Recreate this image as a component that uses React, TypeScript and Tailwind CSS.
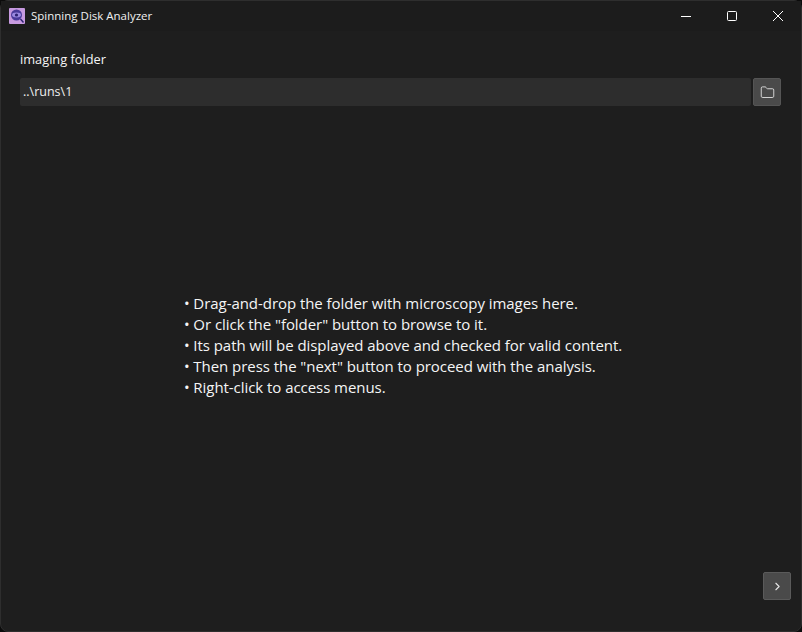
import {ChevronRight, Folder} from 'lucide-react';

const lines = [
    'Drag-and-drop the folder with microscopy images here.',
    'Or click the "folder" button to browse to it.',
    'Its path will be displayed above and checked for valid content.',
    'Then press the "next" button to proceed with the analysis.',
    'Right-click to access menus.',
];

const AppIcon = () => (
    <svg width="16" height="16" viewBox="0 0 16 16" className="shrink-0">
        <rect width="16" height="16" rx="1" fill="#c79ae0"/>
        <circle cx="7.5" cy="7" r="5.5" fill="#4a3a9a"/>
        <ellipse cx="7.5" cy="7" rx="4.5" ry="2.4" fill="#9a88e0"/>
        <circle cx="7.5" cy="7" r="1.6" fill="#2c2170"/>
        <path d="M11.5 11 L14.5 14.5" stroke="#2c2170" strokeWidth="1.4"/>
    </svg>
);

export default function App() {
    return (
        <div className="h-[632px] w-[802px] bg-[#0b0b0b] font-['Open_Sans','Noto_Sans',sans-serif]">
            <div className="flex h-full flex-col rounded-[8px] border border-[#2e2e2e] bg-[#1e1e1e] text-white">
                <div className="flex h-[30px] shrink-0 items-center bg-[#1c1c1c] pl-[8px]">
                    <AppIcon/>
                    <span className="ml-[6px] text-[11.5px] text-[#f0f0f0]">Spinning Disk Analyzer</span>
                    <div className="ml-auto flex items-center">
                        <div className="flex h-[30px] w-[46px] items-center justify-center">
                            <svg width="10" height="10" viewBox="0 0 10 10" fill="none" stroke="#fff" strokeWidth="1">
                                <path d="M0 5.5H10"/>
                            </svg>
                        </div>
                        <div className="flex h-[30px] w-[46px] items-center justify-center">
                            <svg width="10" height="10" viewBox="0 0 10 10" fill="none" stroke="#fff" strokeWidth="1">
                                <rect x="0.5" y="0.5" width="9" height="9" rx="1"/>
                            </svg>
                        </div>
                        <div className="flex h-[30px] w-[46px] items-center justify-center">
                            <svg width="10" height="10" viewBox="0 0 10 10" fill="none" stroke="#fff" strokeWidth="1">
                                <path d="M0 0L10 10M10 0L0 10"/>
                            </svg>
                        </div>
                    </div>
                </div>
                <div className="flex min-h-0 flex-1 flex-col pb-[31px] pl-[19px] pr-[10px] pt-[19px]">
                    <label className="text-[12.8px] leading-[18px] text-[#f5f5f5]">imaging folder</label>
                    <div className="mr-[10px] mt-[10px] flex gap-[2px]">
                        <div className="flex h-[28px] flex-1 items-center rounded-[2px] bg-[#2d2d2d] pl-[3px] text-[12.5px] text-[#f0f0f0]">
                            ..\runs\1
                        </div>
                        <button className="flex h-[28px] w-[28px] items-center justify-center rounded-[2px] border border-[#555555] bg-[#4a4a4a]">
                            <Folder size={15} strokeWidth={1.4} className="text-[#e6e6e6]"/>
                        </button>
                    </div>
                    <div className="flex min-h-0 flex-1 items-center justify-center">
                        <ul className="ml-[-5px] mt-[13px] text-[15px] leading-[21px] tracking-[-0.05px] text-[#f5f5f5]">
                            {lines.map((line) => (
                                <li key={line} className="whitespace-nowrap">
                                    • {line}
                                </li>
                            ))}
                        </ul>
                    </div>
                    <div className="flex justify-end">
                        <button className="flex h-[28px] w-[28px] items-center justify-center rounded-[2px] border border-[#5a5a5a] bg-[#4a4a4a]">
                            <ChevronRight size={13} strokeWidth={2} className="text-[#e6e6e6]"/>
                        </button>
                    </div>
                </div>
            </div>
        </div>
    );
}
